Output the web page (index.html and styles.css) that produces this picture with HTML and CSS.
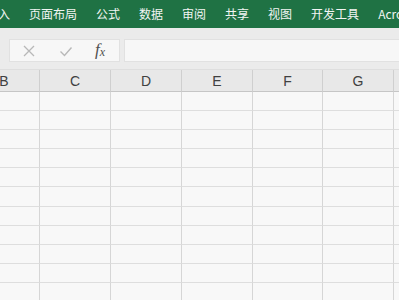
FILE: index.html
```html
<!DOCTYPE html>
<html lang="zh">
<head>
<meta charset="utf-8">
<link rel="stylesheet" href="styles.css">
</head>
<body>
<div class="ribbon">
  <span class="tab tab-cut">入</span>
  <span class="tab">页面布局</span>
  <span class="tab">公式</span>
  <span class="tab">数据</span>
  <span class="tab">审阅</span>
  <span class="tab">共享</span>
  <span class="tab">视图</span>
  <span class="tab">开发工具</span>
  <span class="tab">Acrobat</span>
</div>
<div class="fbar">
  <div class="fbox">
    <svg class="ico" width="14" height="14" viewBox="0 0 14 14"><path d="M2 2 L12 12 M12 2 L2 12" stroke="#b8b8b8" stroke-width="1.3" fill="none"/></svg>
    <svg class="ico" width="14" height="14" viewBox="0 0 14 14"><path d="M1.5 7.5 L5.5 11.5 L12.5 3.5" stroke="#b8b8b8" stroke-width="1.4" fill="none"/></svg>
    <span class="fx">f<sub>x</sub></span>
  </div>
  <div class="finput"></div>
</div>
<div class="sheet">
  <div class="hdr">B</div><div class="hdr">C</div><div class="hdr">D</div><div class="hdr">E</div><div class="hdr">F</div><div class="hdr">G</div><div class="hdr"></div>
  <div class="c"></div><div class="c"></div><div class="c"></div><div class="c"></div><div class="c"></div><div class="c"></div><div class="c"></div>
  <div class="c"></div><div class="c"></div><div class="c"></div><div class="c"></div><div class="c"></div><div class="c"></div><div class="c"></div>
  <div class="c"></div><div class="c"></div><div class="c"></div><div class="c"></div><div class="c"></div><div class="c"></div><div class="c"></div>
  <div class="c"></div><div class="c"></div><div class="c"></div><div class="c"></div><div class="c"></div><div class="c"></div><div class="c"></div>
  <div class="c"></div><div class="c"></div><div class="c"></div><div class="c"></div><div class="c"></div><div class="c"></div><div class="c"></div>
  <div class="c"></div><div class="c"></div><div class="c"></div><div class="c"></div><div class="c"></div><div class="c"></div><div class="c"></div>
  <div class="c"></div><div class="c"></div><div class="c"></div><div class="c"></div><div class="c"></div><div class="c"></div><div class="c"></div>
  <div class="c"></div><div class="c"></div><div class="c"></div><div class="c"></div><div class="c"></div><div class="c"></div><div class="c"></div>
  <div class="c"></div><div class="c"></div><div class="c"></div><div class="c"></div><div class="c"></div><div class="c"></div><div class="c"></div>
  <div class="c"></div><div class="c"></div><div class="c"></div><div class="c"></div><div class="c"></div><div class="c"></div><div class="c"></div>
  <div class="c"></div><div class="c"></div><div class="c"></div><div class="c"></div><div class="c"></div><div class="c"></div><div class="c"></div>
</div>
</body>
</html>
```
FILE: styles.css
```css
html, body {
  margin: 0;
  padding: 0;
  width: 399px;
  height: 300px;
  overflow: hidden;
  background: #f8f8f8;
  font-family: "Noto Sans CJK SC", "Noto Sans", sans-serif;
}
.ribbon {
  height: 28px;
  background: #1f7244;
  display: flex;
  align-items: center;
  gap: 19px;
  margin-left: -2px;
  white-space: nowrap;
  overflow: hidden;
}
.tab {
  color: #f2f5f3;
  font-size: 12px;
  line-height: 28px;
}
.fbar {
  height: 42px;
  background: #ebebeb;
  box-sizing: border-box;
  padding: 11px 0 7px 9px;
  display: flex;
  gap: 4px;
  border-bottom: 1px solid #dedede;
}
.fbox {
  width: 111px;
  background: #f7f7f7;
  border: 1px solid #e1e1e1;
  box-sizing: border-box;
  display: flex;
  align-items: center;
  padding-left: 12px;
  gap: 23px;
}
.ico { display: block; }
.fx {
  font-family: "Liberation Serif", serif;
  font-style: italic;
  font-size: 17px;
  line-height: 17px;
  color: #505050;
  margin-left: -1px;
}
.fx sub {
  font-size: 12px;
  vertical-align: -1px;
}
.finput {
  flex: 1;
  background: #f7f7f7;
  border: 1px solid #e1e1e1;
  border-right: none;
}
.sheet {
  display: grid;
  grid-template-columns: 71px 71px 71px 71px 70px 71px 40px;
  grid-template-rows: 22px;
  grid-auto-rows: 19.1px;
  margin-left: -31px;
}
.hdr {
  background: #e8e8e8;
  border-right: 1px solid #cfcfcf;
  border-bottom: 1px solid #c6c6c6;
  color: #404040;
  font-family: "Liberation Sans", Arial, sans-serif;
  font-size: 14px;
  display: flex;
  align-items: center;
  justify-content: center;
  box-sizing: border-box;
  padding-top: 1px;
}
.c {
  border-right: 1px solid #d6d6d6;
  border-bottom: 1px solid #dedede;
  box-sizing: border-box;
  background: #f8f8f8;
}
```
